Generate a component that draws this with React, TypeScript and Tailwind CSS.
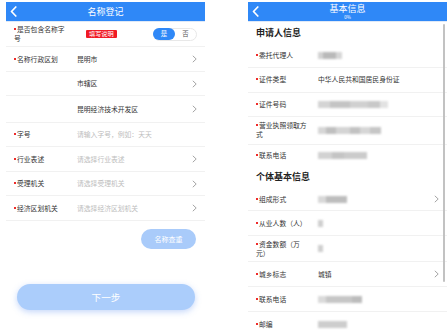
import React from "react";

const Chev = () => (
  <svg width="5" height="8" viewBox="0 0 5 8" className="shrink-0">
    <path d="M0.8 0.8 L4.2 4 L0.8 7.2" fill="none" stroke="#9a9a9a" strokeWidth="0.9" />
  </svg>
);

const Back = () => (
  <svg width="7" height="11" viewBox="0 0 7 11" className="shrink-0">
    <path d="M5.8 1 L1.5 5.5 L5.8 10" fill="none" stroke="#ffffff" strokeWidth="1.7" strokeLinecap="round" strokeLinejoin="round" />
  </svg>
);

const Dot = () => <span className="inline-block w-[2px] h-[2px] bg-[#ee2a2a] mr-[1px] align-[2px]" />;

function Label({ text, w = "w-[63px]" }: { text: string; w?: string }) {
  const lines = text.split("|");
  return (
    <div className={`${w} shrink-0`}>
      <div className="text-[6.8px] leading-[9px] text-[#333] whitespace-nowrap">
        <Dot />
        {lines[0]}
        {lines.slice(1).map((l, i) => (
          <React.Fragment key={i}>
            <br />
            {l}
          </React.Fragment>
        ))}
      </div>
    </div>
  );
}

function LRow({
  h,
  label,
  value,
  placeholder,
  chevron,
}: {
  h: string;
  label?: string;
  value?: string;
  placeholder?: string;
  chevron?: boolean;
}) {
  return (
    <div className={`${h} flex items-center border-b border-[#f1f1f1] pl-[8px] pr-[8px]`}>
      {label ? <Label text={label} /> : <div className="w-[63px] shrink-0" />}
      <div className="flex-1 text-[6.8px] leading-[9px]">
        {value && <span className="text-[#333]">{value}</span>}
        {placeholder && <span className="text-[#bdbdbd]">{placeholder}</span>}
      </div>
      {chevron && <Chev />}
    </div>
  );
}

function Blur({ w, parts }: { w: string; parts?: string[] }) {
  return (
    <div className={`${w} h-[7px] flex blur-[1px]`}>
      {(parts ?? ["bg-[#cfcfcf] flex-1"]).map((p, i) => (
        <div key={i} className={`${p} h-full`} />
      ))}
    </div>
  );
}

function RRow({
  h,
  label,
  children,
  chevron,
  border = true,
}: {
  h: string;
  label: string;
  children?: React.ReactNode;
  chevron?: boolean;
  border?: boolean;
}) {
  return (
    <div className={`${h} flex items-center pl-[8px] pr-[8px] ${border ? "border-b border-[#f1f1f1]" : ""}`}>
      <Label text={label} w="w-[62px]" />
      <div className="flex-1 text-[6.8px] leading-[9px] text-[#333]">{children}</div>
      {chevron && <Chev />}
    </div>
  );
}

export default function App() {
  return (
    <div className="w-[447px] h-[336px] overflow-hidden bg-white flex font-['Noto_Sans_CJK_SC','Noto_Sans',sans-serif]">
      {/* Left panel */}
      <div className="ml-[6px] mt-[2px] w-[199px] flex flex-col">
        <div className="h-[20px] bg-[#2f88f7] flex items-center relative pl-[4px] border-b border-[#dfe9f7]">
          <Back />
          <div className="absolute inset-0 flex items-center justify-center text-white text-[9px] leading-[10px]">
            名称登记
          </div>
        </div>
        <div className="h-[25px] flex items-center border-b border-[#f1f1f1] pl-[8px] pr-[8px]">
          <Label text="是否包含名称字|号" />
          <div className="ml-[9px] bg-[#f01a24] text-white text-[6.2px] leading-[8px] h-[8px] px-[3px] rounded-[1px]">
            填写说明
          </div>
          <div className="ml-auto w-[44px] h-[13px] rounded-full border border-[#e8e8e8] flex items-center">
            <div className="w-[22px] h-[12px] -ml-[1px] rounded-full bg-[#2f88f7] flex items-center justify-center text-white text-[6.4px] leading-[8px]">
              是
            </div>
            <div className="flex-1 text-center text-[#555] text-[6.4px] leading-[8px]">否</div>
          </div>
        </div>
        <LRow h="h-[25px]" label="名称行政区划" value="昆明市" chevron />
        <LRow h="h-[24px]" value="市辖区" chevron />
        <LRow h="h-[27px]" value="昆明经济技术开发区" chevron />
        <LRow h="h-[24px]" label="字号" placeholder="请输入字号，例如：天天" />
        <LRow h="h-[25px]" label="行业表述" placeholder="请选择行业表述" chevron />
        <LRow h="h-[24px]" label="受理机关" placeholder="请选择受理机关" chevron />
        <LRow h="h-[25px]" label="经济区划机关" placeholder="请选择经济区划机关" chevron />
        <div className="flex justify-end pr-[9px] mt-[8px]">
          <div className="w-[55px] h-[20px] rounded-full bg-[#a9cbfa] text-white text-[7px] leading-[9px] flex items-center justify-center">
            名称查重
          </div>
        </div>
        <div className="mt-[35px] ml-[11px] w-[178px] h-[26px] rounded-full bg-[#abcdfb] shadow-[0_2px_6px_rgba(90,140,240,0.35)] flex items-center justify-center text-white text-[9.6px] leading-[11px]">
          下一步
        </div>
      </div>

      {/* Right panel */}
      <div className="ml-[43px] mt-[2px] w-[199px] flex flex-col relative">
        <div className="h-[20px] bg-[#2f88f7] flex items-center relative pl-[4px] border-b border-[#dfe9f7]">
          <Back />
          <div className="absolute inset-0 flex flex-col items-center pt-[2px] text-white">
            <div className="text-[9px] leading-[10px]">基本信息</div>
            <div className="text-[4.5px] leading-[5px] mt-[1px]">0%</div>
          </div>
        </div>
        <div className="h-[22px] flex items-center pl-[8px] text-[9px] leading-[10px] font-bold text-[#222]">申请人信息</div>
        <RRow h="h-[24px]" label="委托代理人">
          <Blur w="w-[24px]" parts={["bg-[#d2d2d2] w-[5px]", "bg-[#b9b9b9] flex-1", "bg-[#d6d6d6] w-[6px]"]} />
        </RRow>
        <RRow h="h-[25px]" label="证件类型">中华人民共和国居民身份证</RRow>
        <RRow h="h-[24px]" label="证件号码">
          <Blur
            w="w-[70px]"
            parts={["bg-[#d4d4d4] w-[12px]", "bg-[#c4c4c4] w-[20px]", "bg-[#d0d0d0] w-[18px]", "bg-[#c8c8c8] w-[12px]", "bg-[#e2e2e2] flex-1"]}
          />
        </RRow>
        <RRow h="h-[28px]" label="营业执照领取方|式">
          <Blur
            w="w-[63px]"
            parts={["bg-[#d6d6d6] w-[8px]", "bg-[#bfbfbf] w-[10px]", "bg-[#d4d4d4] w-[14px]", "bg-[#c2c2c2] w-[10px]", "bg-[#d6d6d6] w-[10px]", "bg-[#c6c6c6] flex-1"]}
          />
        </RRow>
        <RRow h="h-[21px]" label="联系电话" border={false}>
          <Blur w="w-[49px]" parts={["bg-[#d2d2d2] w-[14px]", "bg-[#c4c4c4] w-[12px]", "bg-[#cbcbcb] flex-1"]} />
        </RRow>
        <div className="h-[23px] flex items-center pl-[8px] text-[9px] leading-[10px] font-bold text-[#222]">个体基本信息</div>
        <RRow h="h-[23px]" label="组成形式" chevron>
          <Blur w="w-[29px]" parts={["bg-[#d8d8d8] w-[8px]", "bg-[#bdbdbd] flex-1"]} />
        </RRow>
        <RRow h="h-[25px]" label="从业人数（人）">
          <Blur w="w-[5px]" parts={["bg-[#cfcfcf] flex-1"]} />
        </RRow>
        <RRow h="h-[26px]" label="资金数额（万|元）">
          <Blur w="w-[5px]" parts={["bg-[#cfcfcf] flex-1"]} />
        </RRow>
        <RRow h="h-[25px]" label="城乡标志" chevron>城镇</RRow>
        <RRow h="h-[25px]" label="联系电话">
          <Blur w="w-[44px]" parts={["bg-[#dadada] w-[8px]", "bg-[#c6c6c6] flex-1", "bg-[#bcbcbc] w-[10px]"]} />
        </RRow>
        <RRow h="h-[24px]" label="邮编" border={false}>
          <Blur w="w-[29px]" parts={["bg-[#cdcdcd] flex-1"]} />
        </RRow>
        <div className="absolute right-[2px] top-[22px] h-[258px] w-[2px] bg-[#c2c2c2] rounded-full" />
      </div>
    </div>
  );
}
